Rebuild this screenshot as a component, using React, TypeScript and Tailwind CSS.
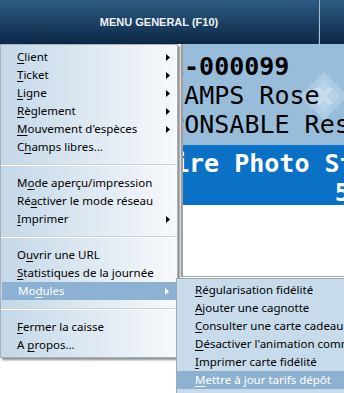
import React from 'react';

type Item = { label: string; u: number; arrow?: boolean; active?: boolean } | 'sep';

const mainItems: Item[] = [
  { label: 'Client', u: 0, arrow: true },
  { label: 'Ticket', u: 0, arrow: true },
  { label: 'Ligne', u: 0, arrow: true },
  { label: 'Règlement', u: 0, arrow: true },
  { label: "Mouvement d'espèces", u: 0, arrow: true },
  { label: 'Champs libres...', u: 1 },
  'sep',
  { label: 'Mode aperçu/impression', u: 1 },
  { label: 'Réactiver le mode réseau', u: 2 },
  { label: 'Imprimer', u: 0, arrow: true },
  'sep',
  { label: 'Ouvrir une URL', u: 1 },
  { label: 'Statistiques de la journée', u: 0 },
  { label: 'Modules', u: 2, arrow: true, active: true },
  'sep',
  { label: 'Fermer la caisse', u: 0 },
  { label: 'A propos...', u: 2 },
];

const subItems = [
  { label: 'Régularisation fidélité', u: 0 },
  { label: 'Ajouter une cagnotte', u: 0 },
  { label: 'Consulter une carte cadeau', u: 0 },
  { label: "Désactiver l'animation commerciale", u: 0 },
  { label: 'Imprimer carte fidélité', u: 0 },
  { label: 'Mettre à jour tarifs dépôt', u: 0, active: true },
];

function Label({ text, u }: { text: string; u: number }) {
  return (
    <span className="whitespace-nowrap">
      {text.slice(0, u)}
      <span className="underline underline-offset-2">{text[u]}</span>
      {text.slice(u + 1)}
    </span>
  );
}

function Arrow({ white }: { white?: boolean }) {
  return (
    <svg width="4" height="7" viewBox="0 0 4 7" className="ml-auto mr-[7px]">
      <path d="M0 0 L4 3.5 L0 7 Z" fill={white ? '#ffffff' : '#000000'} />
    </svg>
  );
}

function MainMenu() {
  return (
    <div className="absolute left-0 top-[44px] w-[178px] py-[3px] border border-[#a7b2bb] bg-gradient-to-r from-[#c4d8e8] to-[#f7f9fb] shadow-[2px_2px_2px_rgba(0,0,0,0.45)] text-[11.5px] text-black font-['Noto_Sans',sans-serif]">
      {mainItems.map((it, i) =>
        it === 'sep' ? (
          <div key={i} className="h-[18px] flex items-center">
            <div className="w-full h-[2px] border-t border-[#c9d0d6] border-b border-b-white" />
          </div>
        ) : (
          <div
            key={i}
            className={`h-[18px] flex items-center pl-[16px] ${it.active ? 'bg-[#8cb1d2] text-white mx-[1px] pl-[15px]' : ''}`}
          >
            <Label text={it.label} u={it.u} />
            {it.arrow && <Arrow white={it.active} />}
          </div>
        )
      )}
    </div>
  );
}

function SubMenu() {
  return (
    <div className="absolute left-[176px] top-[278px] w-[200px] h-[130px] py-[2px] border border-[#9ea9b2] bg-[#c7dbeb] text-[11.5px] text-black font-['Noto_Sans',sans-serif]">
      {subItems.map((it, i) => (
        <div
          key={i}
          className={`h-[18px] flex items-center pl-[18px] overflow-hidden ${it.active ? 'bg-[#8db1d1] text-white' : ''}`}
        >
          <Label text={it.label} u={it.u} />
        </div>
      ))}
    </div>
  );
}

function Watermark() {
  return (
    <svg width="48" height="48" viewBox="0 0 48 48" className="absolute left-[117px] top-[28px]">
      <path d="M24 0 L48 24 L24 48 L0 24 Z" fill="#ffffff" fillOpacity="0.22" />
      <path d="M24 7 L41 24 L24 41 L7 24 Z" fill="#ffffff" fillOpacity="0.12" />
      <path d="M15 16 L21 16 L24 21 L27 16 L33 16 L27 24 L33 32 L27 32 L24 27 L21 32 L15 32 L21 24 Z" fill="#ffffff" fillOpacity="0.25" />
    </svg>
  );
}

export default function App() {
  return (
    <div className="relative w-[344px] h-[393px] overflow-hidden bg-white">
      <div className="h-[44px] flex bg-gradient-to-b from-[#2e5d83] to-[#0c2746]">
        <div className="w-[318px] flex items-center justify-center text-[11px] font-bold text-[#eef3f8] font-['Liberation_Sans',Arial,sans-serif]">
          MENU GENERAL (F10)
        </div>
        <div className="w-[1px] bg-[#2a4a68]" />
        <div className="w-[1px] bg-[#9fc0da]" />
        <div className="flex-1" />
      </div>

      <div className="flex">
        <div className="w-[181px]" />
        <div className="flex-1 border-l-2 border-[#a2a2a2] overflow-hidden">
          <div className="relative h-[101px] bg-[#97bddb] pt-[8px] font-['DejaVu_Sans_Mono',monospace] text-[25px] leading-[29px] text-black">
            <Watermark />
            <div className="relative whitespace-nowrap ml-[-14px] font-bold">1-000099</div>
            <div className="relative whitespace-nowrap ml-[-29px]">CHAMPS Rose</div>
            <div className="relative whitespace-nowrap ml-[-59px]">RESPONSABLE Responsable</div>
          </div>
          <div className="h-[60px] bg-[#0a71c6] pt-[4px] font-['DejaVu_Sans_Mono',monospace] text-[25px] leading-[29px] font-bold text-white">
            <div className="whitespace-nowrap ml-[-9px]">ire Photo Studio</div>
            <div className="whitespace-nowrap text-right mr-[-51px]">5,00</div>
          </div>
          <div className="h-[72px] bg-white border-b border-[#a9a9a9]" />
        </div>
      </div>

      <MainMenu />
      <SubMenu />
    </div>
  );
}
